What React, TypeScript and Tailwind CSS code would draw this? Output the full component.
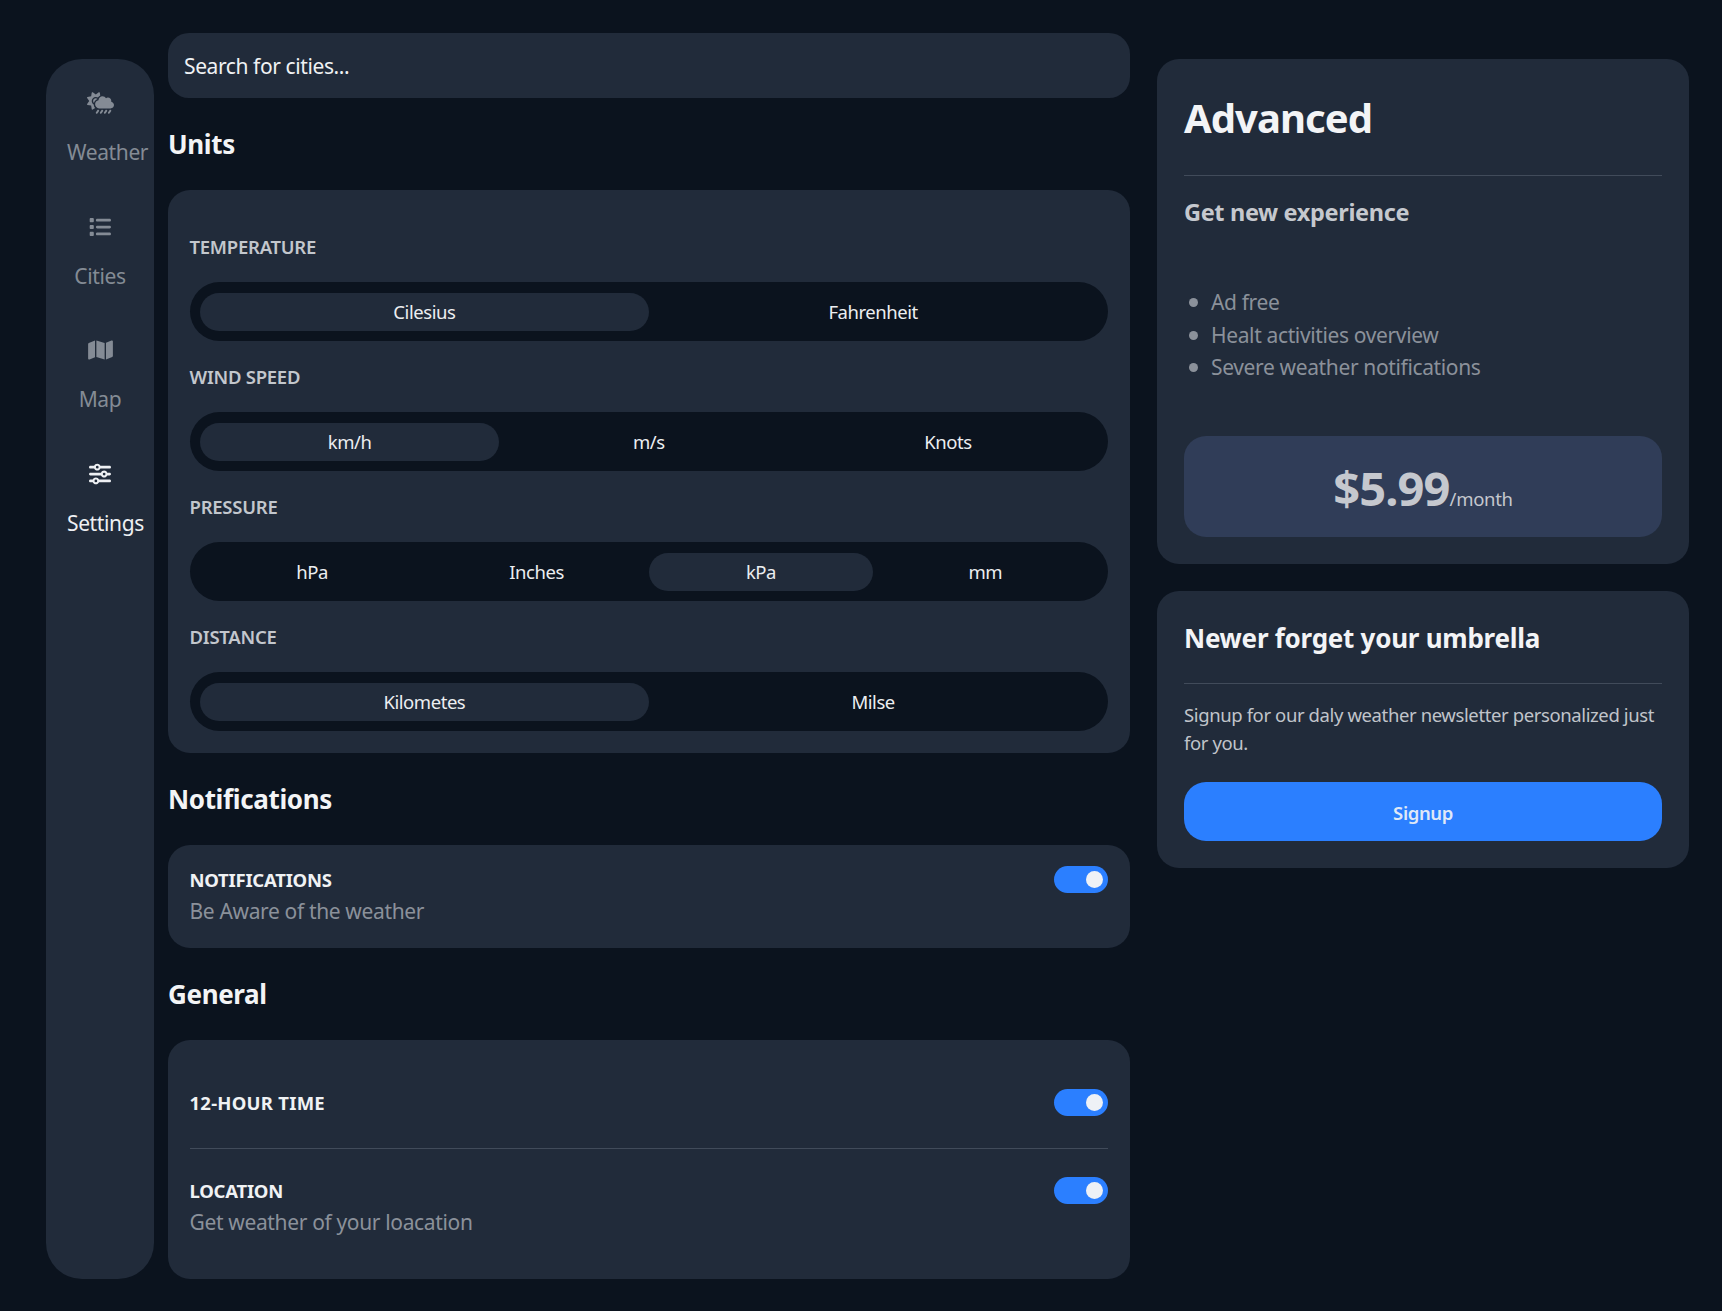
import React, { type ReactNode } from "react";
import { FaCloudSunRain, FaList, FaMap, FaSliders } from "react-icons/fa6";

type NavItem = { label: string; icon: ReactNode; active?: boolean };

const nav: NavItem[] = [
  { label: "Weather", icon: <FaCloudSunRain className="h-[24px] w-[27px]" /> },
  { label: "Cities", icon: <FaList className="size-[22px]" /> },
  { label: "Map", icon: <FaMap className="h-[22px] w-[25px]" /> },
  { label: "Settings", icon: <FaSliders className="size-[22px]" />, active: true },
];

const units = [
  { label: "TEMPERATURE", options: ["Cilesius", "Fahrenheit"], selected: 0 },
  { label: "WIND SPEED", options: ["km/h", "m/s", "Knots"], selected: 0 },
  { label: "PRESSURE", options: ["hPa", "Inches", "kPa", "mm"], selected: 2 },
  { label: "DISTANCE", options: ["Kilometes", "Milse"], selected: 0 },
];

function Sidebar() {
  return (
    <aside className="mt-[59px] flex h-[1220px] w-[108px] shrink-0 flex-col rounded-[36px] bg-[#212b3a] pt-[27px]">
      {nav.map((n) => (
        <a
          key={n.label}
          className={`flex h-[123.7px] flex-col px-[21px] text-[21px] tracking-[-0.38px] ${n.active ? "text-[#eef0f3]" : "text-[#848b95]"}`}
        >
          <span className="flex h-[34px] w-[66px] items-center justify-center">{n.icon}</span>
          <span className="mt-[17px] min-w-[66px] self-start text-center leading-[30px]">{n.label}</span>
        </a>
      ))}
    </aside>
  );
}

function Heading({ children }: { children: ReactNode }) {
  return (
    <h2 className="flex h-[92px] items-center pt-[2px] text-[26px] font-bold tracking-[-0.35px] text-[#f3f4f6]">
      {children}
    </h2>
  );
}

function Toggle() {
  return (
    <button className="flex h-[27px] w-[54px] shrink-0 items-center justify-end rounded-full bg-[#2b7fff] pr-[5px]">
      <span className="size-[17px] rounded-full bg-[#eef1f6]" />
    </button>
  );
}

function SettingRow({ title, detail, tracking = "tracking-[-0.25px]" }: { title: string; detail?: string; tracking?: string }) {
  return (
    <div className="flex justify-between">
      <div>
        <h3 className={`text-[18.5px] font-bold leading-[28px] text-[#f0f2f4] ${tracking}`}>{title}</h3>
        {detail && <p className="mt-[2px] text-[21px] leading-[30px] tracking-[-0.35px] text-[#8b919a]">{detail}</p>}
      </div>
      <Toggle />
    </div>
  );
}

export default function App() {
  return (
    <div className="flex h-[1311px] w-[1722px] overflow-hidden bg-[#0b131e] pl-[46px] font-['Noto_Sans',sans-serif]">
      <Sidebar />

      <main className="ml-[14px] w-[962px] shrink-0 pt-[33px]">
        <div className="flex h-[64.5px] items-center rounded-[21px] bg-[#212b3a] pt-[3px] pl-[16px] text-[21px] tracking-[-0.4px] text-[#f0f2f4]">
          Search for cities...
        </div>

        <Heading>Units</Heading>
        <section className="h-[563px] rounded-[22px] bg-[#212b3a] pt-[32.5px] pr-[22px] pl-[21.5px]">
          {units.map((u) => (
            <div key={u.label} className="h-[130px]">
              <h3 className="h-[60px] pt-[11px] text-[18.5px] font-semibold leading-[28px] tracking-[-0.25px] text-[#c3c7cd]">
                {u.label}
              </h3>
              <div className="flex h-[59px] items-center rounded-[30px] bg-[#0b131e] px-[10.5px]">
                {u.options.map((o, i) => (
                  <div
                    key={o}
                    className={`flex h-[38px] flex-1 items-center justify-center rounded-full pt-[1px] text-[18.5px] tracking-[-0.45px] text-[#eceef1] ${i === u.selected ? "bg-[#212b3a]" : ""}`}
                  >
                    {o}
                  </div>
                ))}
              </div>
            </div>
          ))}
        </section>

        <Heading>Notifications</Heading>
        <section className="h-[103px] rounded-[22px] bg-[#212b3a] pt-[21.5px] pr-[22px] pl-[21.5px]">
          <SettingRow title="NOTIFICATIONS" detail="Be Aware of the weather" />
        </section>

        <Heading>General</Heading>
        <section className="h-[239px] rounded-[22px] bg-[#212b3a] pt-[49px] pr-[22px] pl-[21.5px]">
          <SettingRow title="12-HOUR TIME" tracking="tracking-[0.25px]" />
          <hr className="mt-[31.5px] mb-[27.5px] border-[#414b5a]" />
          <SettingRow title="LOCATION" detail="Get weather of your loacation" />
        </section>
      </main>

      <div className="ml-[27px] flex w-[532px] shrink-0 flex-col gap-[27px] pt-[59px]">
        <section className="h-[505px] rounded-[22px] bg-[#212b3a] px-[27px]">
          <h1 className="h-[116px] pt-[32px] text-[40px] font-bold leading-[54px] tracking-[-0.95px] text-[#f3f4f6]">Advanced</h1>
          <hr className="border-[#414b5a]" />
          <h3 className="mt-[20px] text-[23.5px] font-bold leading-[32px] tracking-[-0.35px] text-[#c5c8ce]">
            Get new experience
          </h3>
          <ul className="mt-[58px] text-[21px] leading-[32.7px] tracking-[-0.36px] text-[#8b919a]">
            {["Ad free", "Healt activities overview", "Severe weather notifications"].map((f) => (
              <li key={f} className="flex items-center pl-[5px]">
                <span className="mr-[13px] size-[9px] rounded-full bg-[#8b919a]" />
                {f}
              </li>
            ))}
          </ul>
          <div className="mt-[51.5px] flex h-[101px] items-baseline justify-center rounded-[22px] bg-[#303d58] pt-[18px] text-[#c5c8ce]">
            <span className="text-[47px] font-bold leading-[68px] tracking-[-0.9px]">$5.99</span>
            <span className="text-[18.5px] tracking-[-0.3px]">/month</span>
          </div>
        </section>

        <section className="h-[277px] rounded-[22px] bg-[#212b3a] px-[27px]">
          <h2 className="h-[92px] pt-[29px] text-[26px] font-bold leading-[36px] tracking-[-0.26px] text-[#f3f4f6]">
            Newer forget your umbrella
          </h2>
          <hr className="border-[#414b5a]" />
          <p className="mt-[17px] whitespace-nowrap text-[18.5px] leading-[27.5px] tracking-[-0.39px] text-[#c0c4ca]">
            Signup for our daly weather newsletter personalized just
            <br />
            for you.
          </p>
          <button className="mt-[26px] flex h-[59px] w-full items-center justify-center rounded-[22px] bg-[#2b7fff] pt-[2px] text-[18.5px] font-semibold tracking-[-0.4px] text-[#dfe8f7]">
            Signup
          </button>
        </section>
      </div>
    </div>
  );
}
